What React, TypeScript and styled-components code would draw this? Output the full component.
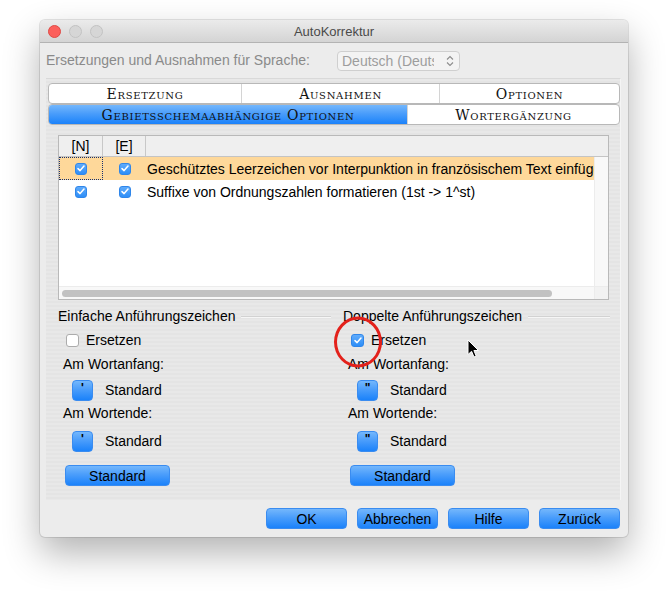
import React from 'react';
import styled, { createGlobalStyle, css } from 'styled-components';

const GlobalStyle = createGlobalStyle`
  html, body {
    margin: 0;
    padding: 0;
    background: #ffffff;
  }
  body {
    font-family: "Liberation Sans", Arial, sans-serif;
    font-size: 14px;
    color: #000;
  }
`;

const blueFill = css`
  background: linear-gradient(to bottom, #74b7fc 0%, #4a9dfb 45%, #1b82fa 100%);
  border: 1px solid #3a8cf0;
`;

const Stage = styled.div`
  width: 668px;
  height: 597px;
  box-sizing: border-box;
  padding: 20px 0 0 40px;
`;

const Window = styled.div`
  position: relative;
  width: 588px;
  height: 517px;
  background: #ececec;
  border-radius: 5px;
  box-shadow: 0 16px 36px rgba(0, 0, 0, 0.3), 0 0 0 1px rgba(0, 0, 0, 0.1);
  display: flex;
  flex-direction: column;
  overflow: hidden;
`;

const TitleBar = styled.div`
  height: 22px;
  border-bottom: 1px solid #b3b3b3;
  background: linear-gradient(to bottom, #ebebeb, #d4d4d4);
  display: grid;
  grid-template-columns: 80px 1fr 80px;
  align-items: center;
`;

const Lights = styled.div`
  display: flex;
  gap: 8px;
  padding-left: 8px;
`;

const Light = styled.span<{ $color: string; $edge: string }>`
  width: 11px;
  height: 11px;
  border-radius: 50%;
  background: ${(p) => p.$color};
  border: 0.5px solid ${(p) => p.$edge};
`;

const Title = styled.div`
  text-align: center;
  font-size: 13px;
  color: #4a4a4a;
`;

const LangRow = styled.div`
  height: 35px;
  display: flex;
  align-items: center;
  padding: 0 0 1px 6px;
  box-sizing: border-box;
`;

const LangLabel = styled.span`
  width: 291px;
  color: #8a8a8a;
`;

const Select = styled.div`
  width: 123px;
  height: 20px;
  box-sizing: border-box;
  border: 1px solid #cfcfcf;
  border-radius: 4px;
  background: #f3f3f3;
  display: flex;
  align-items: center;
  justify-content: space-between;
  padding: 0 5px 0 4px;
  color: #9d9d9d;
  margin-top: 2px;
`;

const SelectText = styled.span`
  width: 92px;
  overflow: hidden;
  white-space: nowrap;
`;

const Panel = styled.div`
  height: 422px;
  box-sizing: border-box;
  margin: 0 7px 0 6px;
  border-top: 1px solid #d9d9d9;
  border-right: 1px solid #f4f4f4;
  background: repeating-linear-gradient(to bottom, #e8e8e8 0, #e8e8e8 2px, #e4e4e4 2px, #e4e4e4 4px);
  padding: 4px 0 0 2px;
  display: flex;
  flex-direction: column;
`;

const TabRow = styled.div<{ $cols: string }>`
  width: 572px;
  height: 21px;
  box-sizing: border-box;
  display: grid;
  grid-template-columns: ${(p) => p.$cols};
  border: 1px solid #b8b8b8;
  border-radius: 4px;
  background: #fff;
  overflow: hidden;
`;

const Tab = styled.div<{ $active?: boolean }>`
  display: flex;
  align-items: center;
  justify-content: center;
  font-family: "DejaVu Serif", "Liberation Serif", serif;
  font-variant: small-caps;
  font-size: 14px;
  letter-spacing: 0.7px;
  line-height: 1;
  color: #111;
  & + & {
    border-left: 1px solid #d4d4d4;
  }
  ${(p) => p.$active && blueFill}
  ${(p) => p.$active && css`border: none;`}
`;

const TableBox = styled.div`
  margin: 10px 0 0 10px;
  width: 551px;
  height: 165px;
  box-sizing: border-box;
  border: 1px solid #b9b9b9;
  background: #fff;
  display: grid;
  grid-template-columns: 1fr 14px;
  grid-template-rows: 21px 1fr 13px;
`;

const HeaderRow = styled.div`
  grid-column: 1 / 3;
  display: grid;
  grid-template-columns: 44px 43px 1fr;
  background: #efefef;
  border-bottom: 1px solid #c4c4c4;
`;

const HeaderCell = styled.div`
  display: flex;
  align-items: center;
  justify-content: center;
  border-right: 1px solid #c8c8c8;
  &:last-child {
    border-right: none;
  }
`;

const Rows = styled.div`
  overflow: hidden;
`;

const Row = styled.div<{ $selected?: boolean }>`
  height: 23px;
  display: grid;
  grid-template-columns: 44px 43px 1fr;
  align-items: center;
  background: ${(p) => (p.$selected ? '#fed89a' : 'transparent')};
`;

const Cell = styled.div<{ $focus?: boolean }>`
  height: 100%;
  box-sizing: border-box;
  display: flex;
  align-items: center;
  justify-content: center;
  ${(p) => p.$focus && css`border: 1px dotted #17306e;`}
`;

const TextCell = styled.div`
  padding-left: 1px;
  white-space: nowrap;
  overflow: hidden;
`;

const VScroll = styled.div`
  background: #f8f8f8;
  border-left: 1px solid #ececec;
`;

const HScroll = styled.div`
  background: #f8f8f8;
  border-top: 1px solid #ececec;
  padding: 3px 0 0 3px;
  box-sizing: border-box;
`;

const Thumb = styled.div`
  width: 490px;
  height: 7px;
  border-radius: 4px;
  background: #c2c2c2;
`;

const Corner = styled.div`
  background: #f2f2f2;
  border-top: 1px solid #ececec;
  border-left: 1px solid #ececec;
`;

const CheckBox = styled.span<{ $checked?: boolean; $size?: number }>`
  position: relative;
  width: ${(p) => p.$size ?? 12}px;
  height: ${(p) => p.$size ?? 12}px;
  box-sizing: border-box;
  border-radius: 3px;
  display: inline-flex;
  align-items: center;
  justify-content: center;
  flex-shrink: 0;
  ${(p) =>
    p.$checked
      ? css`
          background: linear-gradient(to bottom, #5fabfb, #2d8ef8);
          border: 1px solid #2f86ea;
        `
      : css`
          background: #fff;
          border: 1px solid #acacac;
        `}
`;

const QuoteGrid = styled.div`
  margin: 8px 0 0 10px;
  width: 552px;
  display: grid;
  grid-template-columns: 285px 1fr;
`;

const Group = styled.div`
  display: flex;
  flex-direction: column;
`;

const GroupHeading = styled.div<{ $gap: number }>`
  height: 16px;
  display: flex;
  align-items: center;
  gap: 6px;
  padding-right: ${(p) => p.$gap}px;
  white-space: nowrap;
  &::after {
    content: '';
    flex: 1;
    height: 1px;
    background: #d2d2d2;
    box-shadow: 0 1px 0 #f6f6f6;
  }
`;

const CheckRow = styled.label`
  height: 32px;
  display: flex;
  align-items: center;
  gap: 7px;
  padding-left: 8px;
`;

const SubLabel = styled.div<{ $top: number }>`
  height: 16px;
  line-height: 16px;
  margin-top: ${(p) => p.$top}px;
  padding-left: 5px;
`;

const QuoteRow = styled.div<{ $top: number }>`
  height: 22px;
  margin-top: ${(p) => p.$top}px;
  display: flex;
  align-items: center;
  gap: 12px;
  padding-left: 14px;
`;

const QuoteButton = styled.button`
  width: 21px;
  height: 21px;
  box-sizing: border-box;
  border-radius: 4px;
  padding: 0 0 4px;
  font-family: "Liberation Sans", Arial, sans-serif;
  font-size: 12px;
  font-weight: bold;
  color: #000;
  ${blueFill}
`;

const PushButton = styled.button<{ $width: number }>`
  width: ${(p) => p.$width}px;
  height: 21px;
  box-sizing: border-box;
  border-radius: 4px;
  padding: 0;
  font-family: "Liberation Sans", Arial, sans-serif;
  font-size: 14px;
  color: #000;
  ${blueFill}
`;

const StandardWrap = styled.div`
  margin-top: 13px;
  padding-left: 7px;
`;

const Footer = styled.div`
  flex: 1;
  display: flex;
  justify-content: flex-end;
  align-items: flex-start;
  gap: 10px;
  padding: 8px 8px 0 0;
`;

const Highlight = styled.span`
  position: absolute;
  left: 50%;
  top: 50%;
  width: 42px;
  height: 45px;
  border: 3.5px solid #e3211b;
  border-radius: 50%;
  transform: translate(-50%, -46%);
  pointer-events: none;
`;

const Pointer = styled.svg`
  position: absolute;
  left: 427px;
  top: 319px;
`;

const Tick = () => (
  <svg width="8" height="7" viewBox="0 0 8 7">
    <path d="M1 3.6 L3.1 5.6 L7 1.1" fill="none" stroke="#fff" strokeWidth="1.5" strokeLinecap="round" strokeLinejoin="round" />
  </svg>
);

const Updown = () => (
  <svg width="8" height="12" viewBox="0 0 8 12">
    <path d="M1 4.5 L4 1.5 L7 4.5 M1 7.5 L4 10.5 L7 7.5" fill="none" stroke="#8c8c8c" strokeWidth="1.1" />
  </svg>
);

const rows = [
  { text: 'Geschütztes Leerzeichen vor Interpunktion in französischem Text einfügen', selected: true },
  { text: 'Suffixe von Ordnungszahlen formatieren (1st -> 1^st)', selected: false },
];

interface QuoteGroupProps {
  title: string;
  quote: string;
  checked: boolean;
  gap: number;
}

const QuoteGroup: React.FC<QuoteGroupProps> = ({ title, quote, checked, gap }) => (
  <Group>
    <GroupHeading $gap={gap}>{title}</GroupHeading>
    <CheckRow>
      <CheckBox $checked={checked} $size={13}>
        {checked && <Tick />}
        {checked && <Highlight />}
      </CheckBox>
      Ersetzen
    </CheckRow>
    <SubLabel $top={0}>Am Wortanfang:</SubLabel>
    <QuoteRow $top={7}>
      <QuoteButton>{quote}</QuoteButton>
      Standard
    </QuoteRow>
    <SubLabel $top={4}>Am Wortende:</SubLabel>
    <QuoteRow $top={9}>
      <QuoteButton>{quote}</QuoteButton>
      Standard
    </QuoteRow>
    <StandardWrap>
      <PushButton $width={105}>Standard</PushButton>
    </StandardWrap>
  </Group>
);

export default function App() {
  return (
    <Stage>
      <GlobalStyle />
      <Window>
        <TitleBar>
          <Lights>
            <Light $color="#fc605c" $edge="#de4a45" />
            <Light $color="#d6d6d6" $edge="#c2c2c2" />
            <Light $color="#d6d6d6" $edge="#c2c2c2" />
          </Lights>
          <Title>AutoKorrektur</Title>
          <span />
        </TitleBar>

        <LangRow>
          <LangLabel>Ersetzungen und Ausnahmen für Sprache:</LangLabel>
          <Select>
            <SelectText>Deutsch (Deutschland)</SelectText>
            <Updown />
          </Select>
        </LangRow>

        <Panel>
          <TabRow $cols="192px 198px 1fr">
            <Tab>Ersetzung</Tab>
            <Tab>Ausnahmen</Tab>
            <Tab>Optionen</Tab>
          </TabRow>
          <TabRow $cols="358px 1fr">
            <Tab $active>Gebietsschemaabhängige Optionen</Tab>
            <Tab>Wortergänzung</Tab>
          </TabRow>

          <TableBox>
            <HeaderRow>
              <HeaderCell>[N]</HeaderCell>
              <HeaderCell>[E]</HeaderCell>
              <HeaderCell />
            </HeaderRow>
            <Rows>
              {rows.map((r, i) => (
                <Row key={i} $selected={r.selected}>
                  <Cell $focus={i === 0}>
                    <CheckBox $checked><Tick /></CheckBox>
                  </Cell>
                  <Cell>
                    <CheckBox $checked><Tick /></CheckBox>
                  </Cell>
                  <TextCell>{r.text}</TextCell>
                </Row>
              ))}
            </Rows>
            <VScroll />
            <HScroll>
              <Thumb />
            </HScroll>
            <Corner />
          </TableBox>

          <QuoteGrid>
            <QuoteGroup title="Einfache Anführungszeichen" quote="'" checked={false} gap={12} />
            <QuoteGroup title="Doppelte Anführungszeichen" quote={'"'} checked gap={0} />
          </QuoteGrid>
        </Panel>

        <Footer>
          <PushButton $width={81}>OK</PushButton>
          <PushButton $width={81}>Abbrechen</PushButton>
          <PushButton $width={81}>Hilfe</PushButton>
          <PushButton $width={81}>Zurück</PushButton>
        </Footer>

        <Pointer width="13" height="20" viewBox="0 0 13 20">
          <path d="M1 1 L1 15.5 L4.6 12.3 L7 18 L9.2 17 L6.9 11.5 L11.5 11.5 Z" fill="#000" stroke="#fff" strokeWidth="1" strokeLinejoin="round" />
        </Pointer>
      </Window>
    </Stage>
  );
}
